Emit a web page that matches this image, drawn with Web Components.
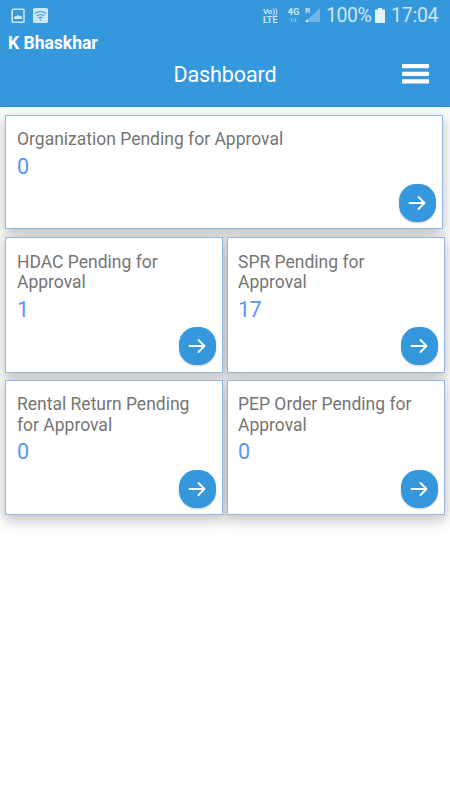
<!DOCTYPE html>
<html lang="en">
<head>
<meta charset="utf-8">
<title>Dashboard</title>
<style>
html,body{margin:0;height:100%;background:#fff}
body{font-family:Roboto,"Liberation Sans",sans-serif;overflow:hidden}
</style>
</head>
<body>
<dashboard-screen></dashboard-screen>
<script>
const define = (name, markup) => {
  const template = document.createElement('template');
  template.innerHTML = markup;
  customElements.define(name, class extends HTMLElement {
    constructor() {
      super();
      this.attachShadow({ mode: 'open' }).append(template.content.cloneNode(true));
    }
  });
};

define('status-bar', `
<style>
:host{display:flex;align-items:center;height:30px;padding:0 12px 0 11px;box-sizing:border-box;color:#cde6f7}
svg{display:block;flex:none}
.wifi{margin-left:8px}
.right{display:flex;align-items:center;margin-left:auto}
.lte{display:flex;flex-direction:column;font:700 9px/8px Roboto,sans-serif;width:16px;margin-right:8px;margin-top:1px}
.lte span:first-child{font-size:8px;letter-spacing:-.2px}
.net{display:flex;flex-direction:column;align-items:center;font:700 9.5px/9px Roboto,sans-serif;width:13px;margin-right:5px}
.net svg{margin-top:1px}
.sig{display:flex;position:relative;width:15px;height:16px;margin-right:6px}
.sig span{position:absolute;left:0;top:0;font:700 8px/7px Roboto,sans-serif}
.big{font-size:19.5px;line-height:22px;white-space:nowrap;padding-top:1px}
.pct{width:46px;letter-spacing:-.45px}
.bat{margin:0 6px 0 3px}
.time{width:47px;letter-spacing:-.25px}
</style>
<svg width="14" height="15" viewBox="0 0 14 15"><rect x="1.2" y="1.2" width="11.8" height="13" rx=".8" fill="none" stroke="currentColor" stroke-width="1.6"/><path d="M3 11V9l1.3-1 1 .5L7 6.8l1.3 1.4 1.2-.6L11 9v2z" fill="currentColor"/></svg>
<svg class="wifi" width="15" height="15" viewBox="0 0 15 15"><rect width="15" height="15" rx="1.8" fill="currentColor"/><g fill="none" stroke="#3598dc" stroke-width="1.2"><path d="M2 5.5q5.5-4 11 0M3.8 7.9q3.7-2.8 7.4 0M5.6 10q1.9-1.4 3.8 0"/></g><circle cx="7.5" cy="12" r=".8" fill="#3598dc"/></svg>
<div class="right">
<div class="lte"><span>Vo))</span><span>LTE</span></div>
<div class="net"><span>4G</span><svg width="9" height="6" viewBox="0 0 9 6" fill="none" stroke="#83bfe9"><path d="M2.5 5V1M1 2.5 2.5 1 4 2.5M6.5 1v4M5 3.5 6.5 5 8 3.5"/></svg></div>
<div class="sig"><svg width="15" height="16" viewBox="0 0 15 16"><path d="M15 1v14H0z" fill="#70b6e6"/><path d="M3 12v3H0z" fill="#e3f2fb"/></svg><span>R</span></div>
<span class="big pct">100%</span>
<svg class="bat" width="10" height="15" viewBox="0 0 10 15"><path d="M3 0h4v1.5h2.3q.7 0 .7.7v12.1q0 .7-.7.7H.7Q0 15 0 14.300V2.200q0-.7.7-.7H3z" fill="#e3f2fb"/></svg>
<span class="big time">17:04</span>
</div>`);

define('app-header', `
<style>
:host{display:block;height:107px;background:#3598dc;color:#fff;box-sizing:border-box;border-bottom:1px solid #268fd3}
.user{height:26px;padding-left:8px;font-weight:700;font-size:17.5px;line-height:26px}
.bar{display:grid;grid-template-columns:1fr auto 1fr;align-items:center;height:37px}
.title{grid-column:2;font-size:21.5px;line-height:26px;letter-spacing:-.1px;white-space:nowrap;padding-top:1px}
button{justify-self:end;display:block;padding:0;margin:-2px 21px 0 0;border:0;background:none;color:inherit}
svg{display:block}
</style>
<status-bar></status-bar>
<div class="user"><slot name="user"></slot></div>
<div class="bar"><div class="title"><slot></slot></div>
<button aria-label="Menu"><svg width="27" height="20" viewBox="0 0 27 20" fill="#fff"><rect width="27" height="4.300" rx="1"/><rect y="7.700" width="27" height="4.300" rx="1"/><rect y="15.300" width="27" height="4.300" rx="1"/></svg></button></div>`);

define('arrow-button', `
<style>
:host{display:block;width:37.5px;height:38px}
button{display:flex;align-items:center;justify-content:center;width:100%;height:100%;padding:0;border:0;border-radius:17px;background:#3598dc;box-shadow:0 1px 2px rgba(0,0,0,.2)}
svg{display:block}
</style>
<button aria-label="Open"><svg width="18" height="16" viewBox="0 0 18 16" fill="none" stroke="#fff" stroke-width="1.8" stroke-linecap="round" stroke-linejoin="round"><path d="M1.500 8h15M10.500 2l6 6-6 6"/></svg></button>`);

define('approval-card', `
<style>
:host{display:flex;flex-direction:column;position:relative;box-sizing:border-box;background:#fff;border:1px solid #92b8e4;padding:var(--top,13.5px) 6px var(--bottom,7px) var(--start,11px)}
:host::before{content:"";position:absolute;inset:0;z-index:-1;box-shadow:0 4px 13px 2px rgba(0,0,0,.25)}
.label{font-size:17.5px;line-height:20.7px;color:#757575;padding-right:8px}
.count{font-size:21.5px;line-height:26px;color:#5796fa;margin-top:4px;letter-spacing:-.5px}
arrow-button{margin:auto 0 0 auto}
</style>
<div class="label"><slot></slot></div><div class="count"><slot name="count"></slot></div><arrow-button></arrow-button>`);

define('dashboard-screen', `
<style>
:host{display:block;height:100%}
app-header{position:relative;z-index:1}
main{display:grid;grid-template-columns:218px 218px;grid-template-rows:114px 136px 135px;column-gap:4px;padding:8px 5px 0;isolation:isolate}
.wide{grid-column:1/3;margin-right:2px;--bottom:6px;--top:13px}
.mid{margin-top:8px;height:136px}
.low{margin-top:15px;height:135px;--top:13px;--bottom:6.5px}
.end{--start:10px}
</style>
<app-header><span slot="user">K Bhaskhar</span>Dashboard</app-header>
<main>
<approval-card class="wide">Organization Pending for Approval<span slot="count">0</span></approval-card>
<approval-card class="mid">HDAC Pending for Approval<span slot="count">1</span></approval-card>
<approval-card class="mid end">SPR Pending for Approval<span slot="count">17</span></approval-card>
<approval-card class="low">Rental Return Pending for Approval<span slot="count">0</span></approval-card>
<approval-card class="low end">PEP Order Pending for Approval<span slot="count">0</span></approval-card>
</main>`);
</script>
</body>
</html>
